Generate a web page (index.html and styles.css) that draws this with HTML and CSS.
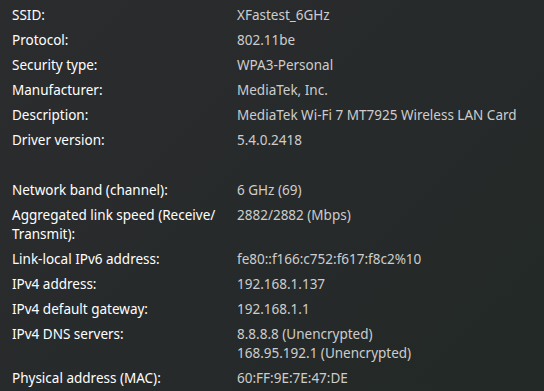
FILE: index.html
```html
<!DOCTYPE html>
<html lang="en">
<head>
    <meta charset="UTF-8">
    <meta name="viewport" content="width=device-width, initial-scale=1.0">
    <title>Wi-Fi properties</title>
    <link rel="stylesheet" href="styles.css">
</head>
<body>

    <!-- Adapter properties list -->
    <dl class="props">
        <dt>SSID:</dt>
        <dd>XFastest_6GHz</dd>
        <dt>Protocol:</dt>
        <dd>802.11be</dd>
        <dt>Security type:</dt>
        <dd>WPA3-Personal</dd>
        <dt>Manufacturer:</dt>
        <dd>MediaTek, Inc.</dd>
        <dt>Description:</dt>
        <dd>MediaTek Wi-Fi 7 MT7925 Wireless LAN Card</dd>
        <dt>Driver version:</dt>
        <dd>5.4.0.2418</dd>

        <div class="spacer"></div>

        <dt>Network band (channel):</dt>
        <dd>6 GHz (69)</dd>
        <dt>Aggregated link speed (Receive/ Transmit):</dt>
        <dd>2882/2882 (Mbps)</dd>
        <dt>Link-local IPv6 address:</dt>
        <dd>fe80::f166:c752:f617:f8c2%10</dd>
        <dt>IPv4 address:</dt>
        <dd>192.168.1.137</dd>
        <dt>IPv4 default gateway:</dt>
        <dd>192.168.1.1</dd>
        <dt>IPv4 DNS servers:</dt>
        <dd>8.8.8.8 (Unencrypted)<br>168.95.192.1 (Unencrypted)</dd>
        <dt>Physical address (MAC):</dt>
        <dd>60:FF:9E:7E:47:DE</dd>
    </dl>

</body>
</html>
```

FILE: styles.css
```css
/* General Styling */
body {
    font-family: 'Noto Sans', 'Open Sans', sans-serif;
    font-size: 13.5px;
    background: linear-gradient(135deg, #2b2c2e 0%, #272a2b 50%, #222926 100%);
    margin: 0;
    padding: 0;
    min-height: 100vh;
    color: #ffffff;
}

.props {
    display: grid;
    grid-template-columns: 225px 1fr;
    row-gap: 6px;
    margin: 0;
    padding: 6px 12px;
    line-height: 19px;
}

.props dt {
    padding-right: 10px;
}

.props dd {
    margin: 0;
    color: #cdcdcd;
}

.spacer {
    grid-column: 1 / -1;
    height: 19px;
}
```
